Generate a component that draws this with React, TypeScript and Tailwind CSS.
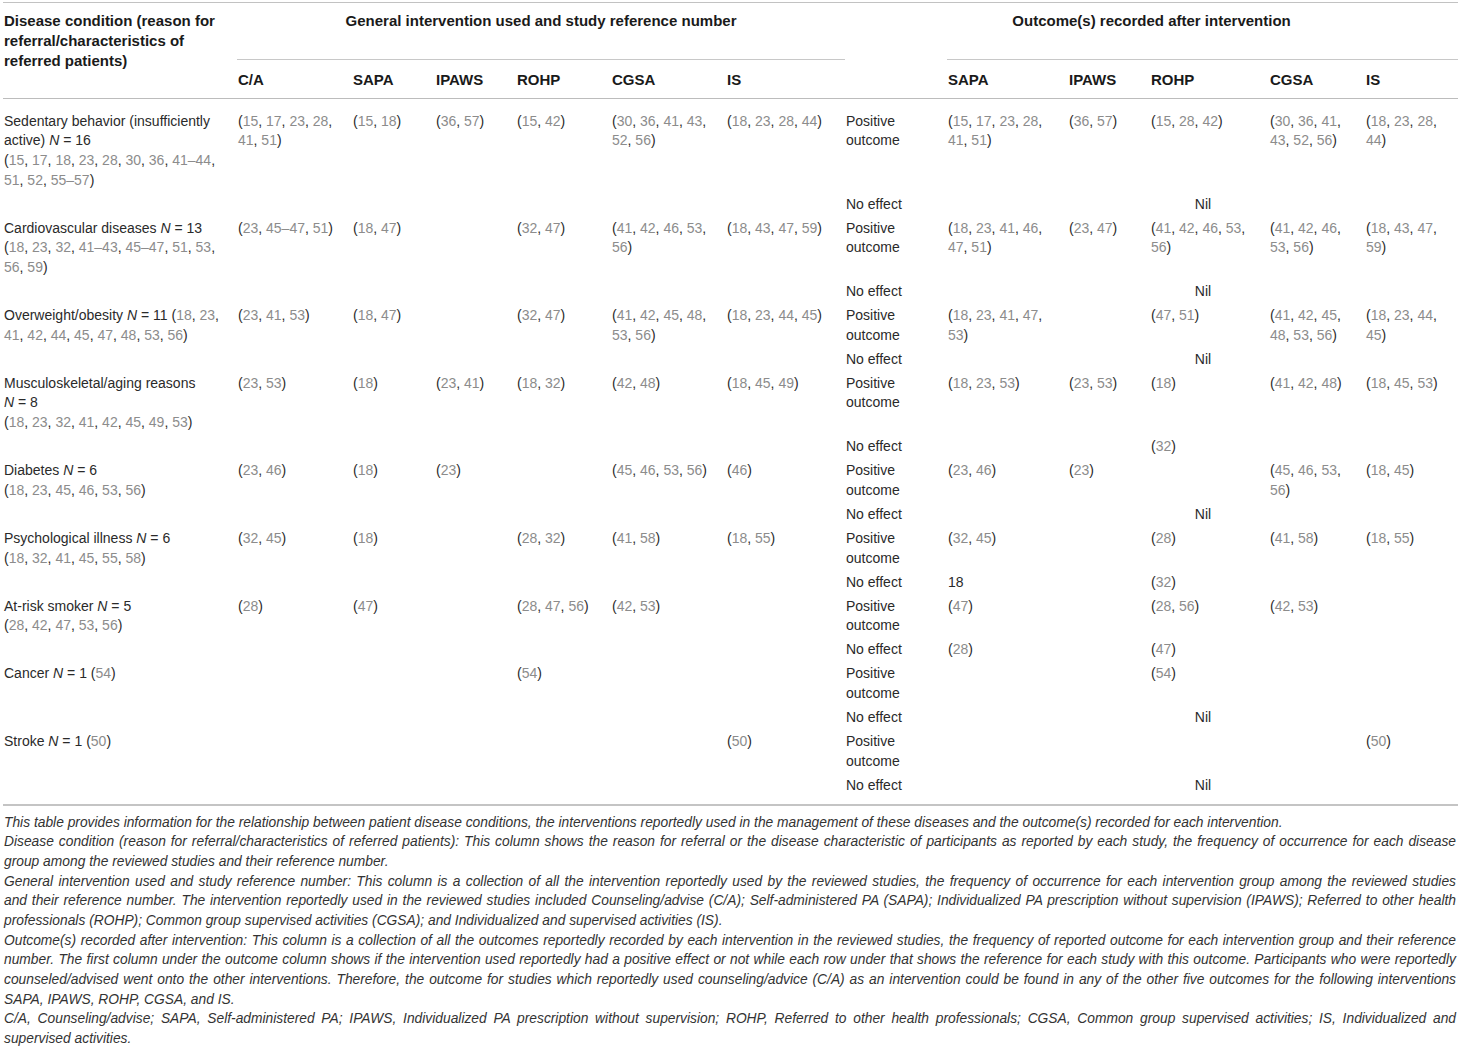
import React from "react";

function R({ t }: { t: string }) {
  const lines = t.split("|");
  return (
    <>
      {lines.map((ln, i) => (
        <React.Fragment key={i}>
          {i > 0 && <br />}
          {ln.split(/(\d+(?:–\d+)?)/).map((p, j) =>
            /^\d/.test(p) ? (
              <span key={j} className="text-[#8c8c8c]">
                {p}
              </span>
            ) : (
              <React.Fragment key={j}>{p}</React.Fragment>
            )
          )}
        </React.Fragment>
      ))}
    </>
  );
}

const N = ({ v }: { v: string }) => (
  <>
    <i>N</i> = {v}
  </>
);

type Row = {
  cond: React.ReactNode;
  iv: string[];
  pos: string[];
  no: React.ReactNode[] | "Nil";
};

const rows: Row[] = [
  {
    cond: (
      <>
        Sedentary behavior (insufficiently
        <br />
        active) <N v="16" />
        <br />
        <R t="(15, 17, 18, 23, 28, 30, 36, 41–44,|51, 52, 55–57)" />
      </>
    ),
    iv: ["(15, 17, 23, 28,|41, 51)", "(15, 18)", "(36, 57)", "(15, 42)", "(30, 36, 41, 43,|52, 56)", "(18, 23, 28, 44)"],
    pos: ["(15, 17, 23, 28,|41, 51)", "(36, 57)", "(15, 28, 42)", "(30, 36, 41,|43, 52, 56)", "(18, 23, 28,|44)"],
    no: "Nil",
  },
  {
    cond: (
      <>
        Cardiovascular diseases <N v="13" />
        <br />
        <R t="(18, 23, 32, 41–43, 45–47, 51, 53,|56, 59)" />
      </>
    ),
    iv: ["(23, 45–47, 51)", "(18, 47)", "", "(32, 47)", "(41, 42, 46, 53,|56)", "(18, 43, 47, 59)"],
    pos: ["(18, 23, 41, 46,|47, 51)", "(23, 47)", "(41, 42, 46, 53,|56)", "(41, 42, 46,|53, 56)", "(18, 43, 47,|59)"],
    no: "Nil",
  },
  {
    cond: (
      <>
        Overweight/obesity <N v="11" /> <R t="(18, 23,|41, 42, 44, 45, 47, 48, 53, 56)" />
      </>
    ),
    iv: ["(23, 41, 53)", "(18, 47)", "", "(32, 47)", "(41, 42, 45, 48,|53, 56)", "(18, 23, 44, 45)"],
    pos: ["(18, 23, 41, 47,|53)", "", "(47, 51)", "(41, 42, 45,|48, 53, 56)", "(18, 23, 44,|45)"],
    no: "Nil",
  },
  {
    cond: (
      <>
        Musculoskeletal/aging reasons
        <br />
        <N v="8" />
        <br />
        <R t="(18, 23, 32, 41, 42, 45, 49, 53)" />
      </>
    ),
    iv: ["(23, 53)", "(18)", "(23, 41)", "(18, 32)", "(42, 48)", "(18, 45, 49)"],
    pos: ["(18, 23, 53)", "(23, 53)", "(18)", "(41, 42, 48)", "(18, 45, 53)"],
    no: ["", "", <R t="(32)" />, "", ""],
  },
  {
    cond: (
      <>
        Diabetes <N v="6" />
        <br />
        <R t="(18, 23, 45, 46, 53, 56)" />
      </>
    ),
    iv: ["(23, 46)", "(18)", "(23)", "", "(45, 46, 53, 56)", "(46)"],
    pos: ["(23, 46)", "(23)", "", "(45, 46, 53,|56)", "(18, 45)"],
    no: "Nil",
  },
  {
    cond: (
      <>
        Psychological illness <N v="6" />
        <br />
        <R t="(18, 32, 41, 45, 55, 58)" />
      </>
    ),
    iv: ["(32, 45)", "(18)", "", "(28, 32)", "(41, 58)", "(18, 55)"],
    pos: ["(32, 45)", "", "(28)", "(41, 58)", "(18, 55)"],
    no: ["18", "", <R t="(32)" />, "", ""],
  },
  {
    cond: (
      <>
        At-risk smoker <N v="5" />
        <br />
        <R t="(28, 42, 47, 53, 56)" />
      </>
    ),
    iv: ["(28)", "(47)", "", "(28, 47, 56)", "(42, 53)", ""],
    pos: ["(47)", "", "(28, 56)", "(42, 53)", ""],
    no: [<R t="(28)" />, "", <R t="(47)" />, "", ""],
  },
  {
    cond: (
      <>
        Cancer <N v="1" /> <R t="(54)" />
      </>
    ),
    iv: ["", "", "", "(54)", "", ""],
    pos: ["", "", "(54)", "", ""],
    no: "Nil",
  },
  {
    cond: (
      <>
        Stroke <N v="1" /> <R t="(50)" />
      </>
    ),
    iv: ["", "", "", "", "", "(50)"],
    pos: ["", "", "", "", "(50)"],
    no: "Nil",
  },
];

const widths = [
  "w-[234px]",
  "w-[115px]",
  "w-[83px]",
  "w-[81px]",
  "w-[95px]",
  "w-[115px]",
  "w-[119px]",
  "w-[102px]",
  "w-[121px]",
  "w-[82px]",
  "w-[119px]",
  "w-[96px]",
  "w-[93px]",
];

const base = "align-top pl-[1px] pr-0 whitespace-nowrap font-normal";

export default function App() {
  const fullLine = "text-justify [text-align-last:justify]";
  return (
    <div className="w-[1458px] h-[1054px] overflow-hidden bg-white font-['Liberation_Sans',Arial,sans-serif] text-[#2a2a2a]">
      <div className="ml-[3px] mt-[2px] border-t border-[#c2c2c2]">
        <table className="table-fixed border-collapse w-[1455px] text-[14px] leading-[19.7px]">
          <colgroup>
            {widths.map((w, i) => (
              <col key={i} className={w} />
            ))}
          </colgroup>
          <thead className="text-[15px] leading-[20px] text-[#1a1a1a]">
            <tr className="h-[56px]">
              <th rowSpan={2} className="align-top text-left pl-[1px] pt-[8px] font-bold whitespace-nowrap border-b border-[#bcbcbc]">
                Disease condition (reason for
                <br />
                referral/characteristics of
                <br />
                referred patients)
              </th>
              <th colSpan={6} className="align-top text-center pt-[8px] font-bold whitespace-nowrap">
                General intervention used and study reference number
              </th>
              <th colSpan={6} className="align-top text-center pt-[8px] font-bold whitespace-nowrap">
                Outcome(s) recorded after intervention
              </th>
            </tr>
            <tr>
              {["C/A", "SAPA", "IPAWS", "ROHP", "CGSA", "IS"].map((h) => (
                <th key={h} className="align-top text-left pl-[1px] pt-[10px] pb-[8px] font-bold border-t border-b border-[#c8c8c8] border-b-[#bcbcbc]">
                  {h}
                </th>
              ))}
              <th className="border-b border-[#bcbcbc]" />
              {["SAPA", "IPAWS", "ROHP", "CGSA", "IS"].map((h) => (
                <th key={"o" + h} className="align-top text-left pl-[1px] pt-[10px] pb-[8px] font-bold border-t border-b border-[#c8c8c8] border-b-[#bcbcbc]">
                  {h}
                </th>
              ))}
            </tr>
          </thead>
          <tbody>
            {rows.map((r, ri) => {
              const first = ri === 0;
              const last = ri === rows.length - 1;
              const pt = first ? "pt-[13px]" : "pt-[2px]";
              const c1 = `${base} text-left ${pt} pb-[2.3px]`;
              const c2b = `${base} pt-[2px] ${last ? "pb-[9px] border-b-2 border-[#c4c4c4]" : "pb-[2.3px]"}`;
              const c2 = `${c2b} text-left`;
              return (
                <React.Fragment key={ri}>
                  <tr>
                    <td className={c1}>{r.cond}</td>
                    {r.iv.map((v, i) => (
                      <td key={i} className={c1}>
                        {v && <R t={v} />}
                      </td>
                    ))}
                    <td className={c1}>
                      Positive
                      <br />
                      outcome
                    </td>
                    {r.pos.map((v, i) => (
                      <td key={i} className={c1}>
                        {v && <R t={v} />}
                      </td>
                    ))}
                  </tr>
                  <tr>
                    {[0, 1, 2, 3, 4, 5, 6].map((i) => (
                      <td key={i} className={c2} />
                    ))}
                    <td className={c2}>No effect</td>
                    {r.no === "Nil" ? (
                      <td colSpan={5} className={`${c2b} text-center`}>
                        Nil
                      </td>
                    ) : (
                      r.no.map((v, i) => (
                        <td key={i} className={c2}>
                          {v}
                        </td>
                      ))
                    )}
                  </tr>
                </React.Fragment>
              );
            })}
          </tbody>
        </table>
        <div className="pl-[1px] pr-[2px] pt-[6.5px] italic text-[13.8px] leading-[19.64px] text-[#333]">
          <div>
            This table provides information for the relationship between patient disease conditions, the interventions reportedly used in the management of these diseases and the outcome(s) recorded for each intervention.
          </div>
          <div className={fullLine}>
            Disease condition (reason for referral/characteristics of referred patients): This column shows the reason for referral or the disease characteristic of participants as reported by each study, the frequency of occurrence for each disease
          </div>
          <div>group among the reviewed studies and their reference number.</div>
          <div className={fullLine}>
            General intervention used and study reference number: This column is a collection of all the intervention reportedly used by the reviewed studies, the frequency of occurrence for each intervention group among the reviewed studies
          </div>
          <div className={fullLine}>
            and their reference number. The intervention reportedly used in the reviewed studies included Counseling/advise (C/A); Self-administered PA (SAPA); Individualized PA prescription without supervision (IPAWS); Referred to other health
          </div>
          <div>
            professionals (ROHP); Common group supervised activities (CGSA); and Individualized and supervised activities (IS).
          </div>
          <div className={fullLine}>
            Outcome(s) recorded after intervention: This column is a collection of all the outcomes reportedly recorded by each intervention in the reviewed studies, the frequency of reported outcome for each intervention group and their reference
          </div>
          <div className={fullLine}>
            number. The first column under the outcome column shows if the intervention used reportedly had a positive effect or not while each row under that shows the reference for each study with this outcome. Participants who were reportedly
          </div>
          <div className={fullLine}>
            counseled/advised went onto the other interventions. Therefore, the outcome for studies which reportedly used counseling/advice (C/A) as an intervention could be found in any of the other five outcomes for the following interventions
          </div>
          <div>SAPA, IPAWS, ROHP, CGSA, and IS.</div>
          <div className={fullLine}>
            C/A, Counseling/advise; SAPA, Self-administered PA; IPAWS, Individualized PA prescription without supervision; ROHP, Referred to other health professionals; CGSA, Common group supervised activities; IS, Individualized and
          </div>
          <div>supervised activities.</div>
        </div>
      </div>
    </div>
  );
}
